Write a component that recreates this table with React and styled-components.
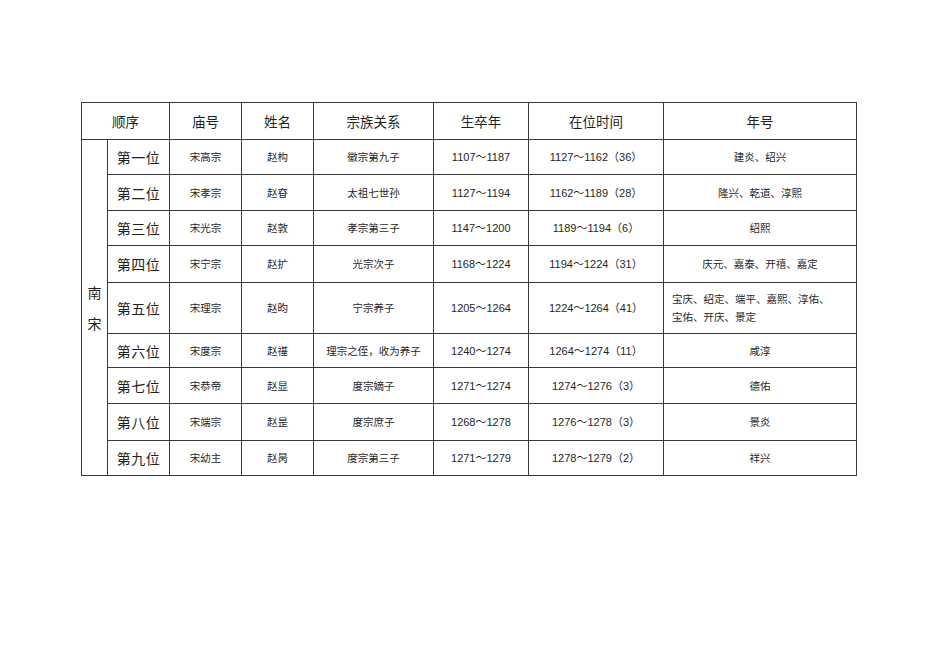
import React from 'react';
import styled, { createGlobalStyle } from 'styled-components';

const GlobalStyle = createGlobalStyle`
  html, body {
    margin: 0;
    padding: 0;
    background: #ffffff;
  }
  body {
    font-family: "Liberation Sans", "Noto Sans CJK SC", sans-serif;
    color: #1f1f1f;
  }
`;

const Page = styled.div`
  width: 950px;
  height: 672px;
  padding: 102px 0 0 81px;
  box-sizing: border-box;
`;

const Table = styled.table`
  width: 775px;
  border-collapse: collapse;
  table-layout: fixed;
  border: 1px solid #3a3a3a;
`;

const HeadCell = styled.th`
  height: 36px;
  padding: 0;
  border: 1px solid #3a3a3a;
  font-family: "Noto Sans CJK SC", sans-serif;
  font-weight: normal;
  font-size: 13.5px;
  text-align: center;
  vertical-align: middle;
`;

const Row = styled.tr`
  height: ${(p) => p.$h}px;
`;

const Cell = styled.td`
  padding: 0 ${(p) => (p.$left ? '8px' : '2px')};
  border: 1px solid #3a3a3a;
  text-align: ${(p) => (p.$left ? 'left' : 'center')};
  vertical-align: middle;
  font-family: ${(p) =>
    p.$num
      ? '"Liberation Sans", "Noto Sans CJK SC", sans-serif'
      : '"Noto Sans CJK SC", sans-serif'};
  font-size: ${(p) => (p.$num ? '11px' : '10.5px')};
  line-height: 18px;
  white-space: nowrap;
`;

const OrderCell = styled(Cell)`
  font-size: 14px;
  letter-spacing: 0.5px;
`;

const DynastyCell = styled.td`
  padding: 0;
  border: 1px solid #3a3a3a;
  text-align: center;
  vertical-align: middle;
  font-family: "Noto Sans CJK SC", sans-serif;
  font-size: 14px;
  line-height: 31px;
`;

const cols = [26, 62, 72, 72, 120, 95, 135, 193];

const rows = [
  ['第一位', '宋高宗', '赵构', '徽宗第九子', '1107～1187', '1127～1162（36）', ['建炎、绍兴'], 35],
  ['第二位', '宋孝宗', '赵昚', '太祖七世孙', '1127～1194', '1162～1189（28）', ['隆兴、乾道、淳熙'], 36],
  ['第三位', '宋光宗', '赵敦', '孝宗第三子', '1147～1200', '1189～1194（6）', ['绍熙'], 35],
  ['第四位', '宋宁宗', '赵扩', '光宗次子', '1168～1224', '1194～1224（31）', ['庆元、嘉泰、开禧、嘉定'], 37],
  ['第五位', '宋理宗', '赵昀', '宁宗养子', '1205～1264', '1224～1264（41）', ['宝庆、绍定、端平、嘉熙、淳佑、', '宝佑、开庆、景定'], 51],
  ['第六位', '宋度宗', '赵禥', '理宗之侄，收为养子', '1240～1274', '1264～1274（11）', ['咸淳'], 34],
  ['第七位', '宋恭帝', '赵显', '度宗嫡子', '1271～1274', '1274～1276（3）', ['德佑'], 36],
  ['第八位', '宋端宗', '赵昰', '度宗庶子', '1268～1278', '1276～1278（3）', ['景炎'], 37],
  ['第九位', '宋幼主', '赵昺', '度宗第三子', '1271～1279', '1278～1279（2）', ['祥兴'], 35],
];

export default function App() {
  return (
    <>
      <GlobalStyle />
      <Page>
        <Table>
          <colgroup>
            {cols.map((w, i) => (
              <col key={i} style={{ width: w }} />
            ))}
          </colgroup>
          <thead>
            <tr>
              <HeadCell colSpan={2}>顺序</HeadCell>
              <HeadCell>庙号</HeadCell>
              <HeadCell>姓名</HeadCell>
              <HeadCell>宗族关系</HeadCell>
              <HeadCell>生卒年</HeadCell>
              <HeadCell>在位时间</HeadCell>
              <HeadCell>年号</HeadCell>
            </tr>
          </thead>
          <tbody>
            {rows.map(([order, temple, name, rel, life, reign, eras, h], i) => (
              <Row key={order} $h={h}>
                {i === 0 && (
                  <DynastyCell rowSpan={rows.length}>
                    南<br />宋
                  </DynastyCell>
                )}
                <OrderCell>{order}</OrderCell>
                <Cell>{temple}</Cell>
                <Cell>{name}</Cell>
                <Cell>{rel}</Cell>
                <Cell $num>{life}</Cell>
                <Cell $num>{reign}</Cell>
                <Cell $left={eras.length > 1}>
                  {eras.map((e, j) => (
                    <React.Fragment key={j}>
                      {j > 0 && <br />}
                      {e}
                    </React.Fragment>
                  ))}
                </Cell>
              </Row>
            ))}
          </tbody>
        </Table>
      </Page>
    </>
  );
}
